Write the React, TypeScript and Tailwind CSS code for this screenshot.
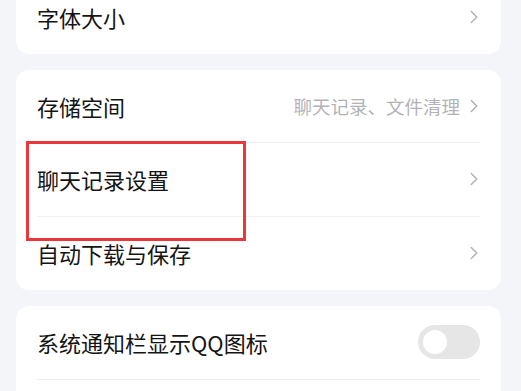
import { ChevronRight } from "lucide-react";

type Row = { label: string; hint?: string; toggle?: boolean };

const groups: Row[][] = [
  [{ label: "字体大小" }],
  [
    { label: "存储空间", hint: "聊天记录、文件清理" },
    { label: "聊天记录设置" },
    { label: "自动下载与保存" },
  ],
  [{ label: "系统通知栏显示QQ图标", toggle: true }, { label: "" }],
];

function Item({ row, last }: { row: Row; last: boolean }) {
  return (
    <div className="flex h-[73.5px] items-center px-[21px]">
      <div
        className={
          "flex h-full flex-1 items-center " +
          (last ? "" : "border-b border-[#f0f0f2]")
        }
      >
        <span className="flex-1 text-[22px] leading-none text-[#141414]">{row.label}</span>
        {row.toggle ? (
          <div className="flex h-[34px] w-[62px] items-center rounded-full bg-[#e6e6e6] pl-[5px]">
            <div className="h-[24px] w-[24px] rounded-full bg-white" />
          </div>
        ) : row.label ? (
          <div className="flex items-center gap-[3px]">
            {row.hint && (
              <span className="text-[18.5px] leading-none text-[#b3b3b6]">{row.hint}</span>
            )}
            <ChevronRight size={22} strokeWidth={1.5} className="mr-[-5px] text-[#b0b0b3]" />
          </div>
        ) : null}
      </div>
    </div>
  );
}

export default function App() {
  return (
    <div
      className="h-[391px] w-[521px] overflow-hidden bg-[#f4f5f8]"
      style={{ fontFamily: '"Noto Sans CJK SC", "Noto Sans", sans-serif' }}
    >
      <div className="mt-[-20px] flex flex-col gap-[16px] pl-[16px] pr-[20px]">
        {groups.map((g, gi) => (
          <div key={gi} className="relative rounded-[13px] bg-white">
            {g.map((r, i) => (
              <Item key={i} row={r} last={i === g.length - 1} />
            ))}
            {gi === 1 && (
              <div className="absolute left-[10px] top-[71px] h-[100px] w-[220px] border-[3px] border-[#e8383d]" />
            )}
          </div>
        ))}
      </div>
    </div>
  );
}
